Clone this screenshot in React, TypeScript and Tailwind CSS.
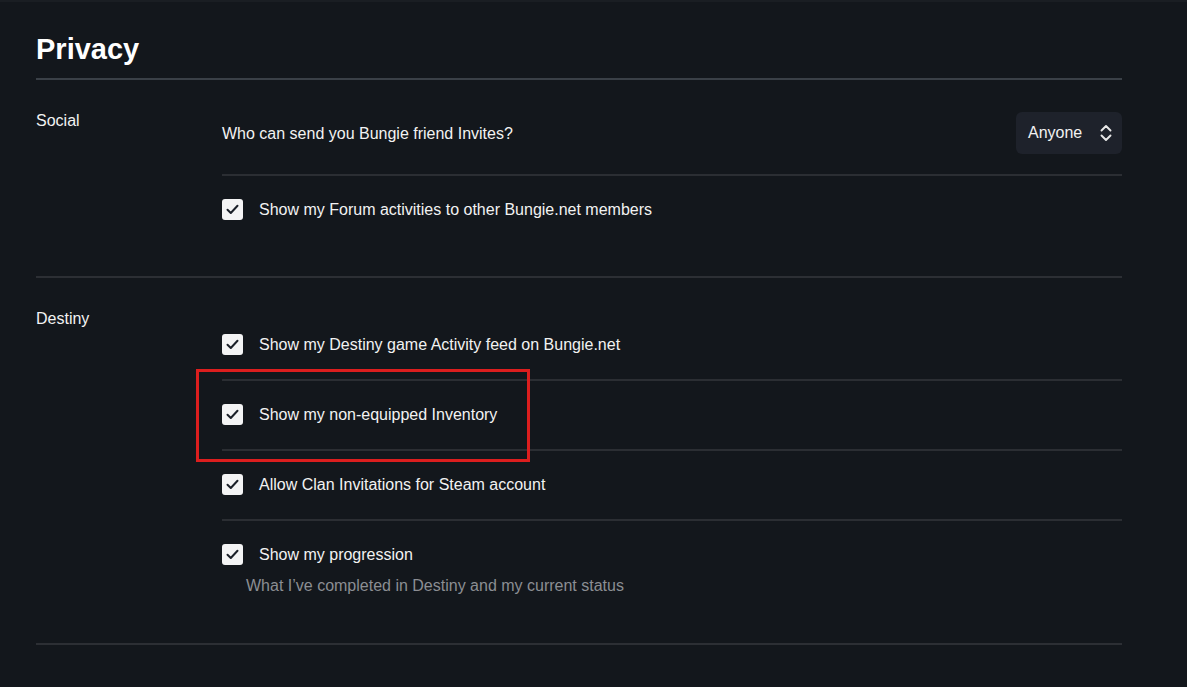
import type { ReactNode } from "react";

function Check() {
  return (
    <div className="flex h-[21px] w-[21px] shrink-0 items-center justify-center rounded-[3px] bg-[#f4f4f5]">
      <svg width="13" height="11" viewBox="0 0 13 11" fill="none">
        <path d="M1.5 5.8 L4.8 9 L11.5 1.8" stroke="#1b2029" strokeWidth="2" strokeLinecap="round" strokeLinejoin="round" />
      </svg>
    </div>
  );
}

function CheckRow({ label, children }: { label: string; children?: ReactNode }) {
  return (
    <div className="flex h-[22px] items-center gap-4">
      <Check />
      <span className="pt-[2px] text-base leading-[22px] text-[#f2f2f2]">{label}</span>
      {children}
    </div>
  );
}

function Section({ title, children }: { title: string; children: ReactNode }) {
  return (
    <div className="flex border-b-2 border-[#2c2f34] pt-[28px]">
      <div className="w-[186px] shrink-0 pt-[1px] text-base leading-6 text-[#f2f2f2]">{title}</div>
      <div className="flex-1">{children}</div>
    </div>
  );
}

export default function App() {
  return (
    <div className="min-h-[687px] bg-[#13171c] font-['Liberation_Sans',Arial,sans-serif]">
      <div className="h-[2px] bg-[#1a1e23]" />
      <div className="pl-9 pr-[65px] pt-[30px]">
        <h1 className="border-b-2 border-[#3a4047] pb-3 text-[29px] font-bold leading-[34px] text-white">Privacy</h1>

        <Section title="Social">
          <div className="flex items-center justify-between border-b-2 border-[#2b2e33] pb-5 pt-1">
            <span className="pt-[2px] text-base text-[#f2f2f2]">Who can send you Bungie friend Invites?</span>
            <div className="flex h-[42px] w-[106px] items-center justify-between rounded-md bg-[#1e222b] pl-3 pr-[9px]">
              <span className="text-base text-[#f2f2f2]">Anyone</span>
              <svg width="14" height="20" viewBox="0 0 14 20" fill="none">
                <path d="M2.5 7.5 L7 3 L11.5 7.5" stroke="#e8e8e8" strokeWidth="1.9" strokeLinecap="round" strokeLinejoin="round" />
                <path d="M2.5 12.5 L7 17 L11.5 12.5" stroke="#e8e8e8" strokeWidth="1.9" strokeLinecap="round" strokeLinejoin="round" />
              </svg>
            </div>
          </div>
          <div className="pb-[56px] pt-[22px]">
            <CheckRow label="Show my Forum activities to other Bungie.net members" />
          </div>
        </Section>

        <Section title="Destiny">
          <div className="border-b-2 border-[#2b2e33] pb-6 pt-[27px]">
            <CheckRow label="Show my Destiny game Activity feed on Bungie.net" />
          </div>
          <div className="relative border-b-2 border-[#2b2e33] pb-6 pt-[22px]">
            <CheckRow label="Show my non-equipped Inventory" />
            <div className="pointer-events-none absolute left-[-26px] top-[-12px] h-[93px] w-[334px] border-[3px] border-[#dc1e1e]" />
          </div>
          <div className="border-b-2 border-[#2b2e33] pb-6 pt-[22px]">
            <CheckRow label="Allow Clan Invitations for Steam account" />
          </div>
          <div className="pb-[45px] pt-[22px]">
            <CheckRow label="Show my progression" />
            <p className="ml-6 mt-2 pt-[1px] text-base leading-6 text-[#8b8e93]">What I’ve completed in Destiny and my current status</p>
          </div>
        </Section>
      </div>
    </div>
  );
}
